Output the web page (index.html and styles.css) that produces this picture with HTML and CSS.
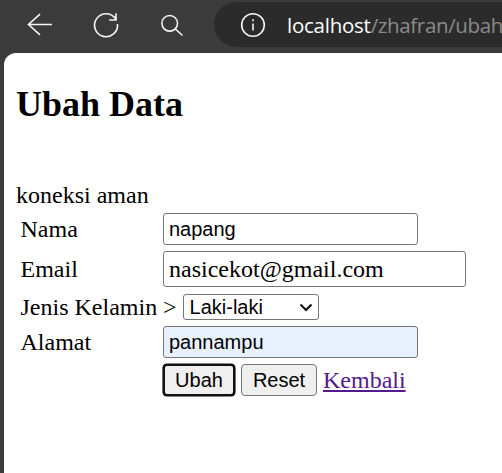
FILE: index.html
```html
<!DOCTYPE html>
<html lang="id">
<head>
<meta charset="utf-8">
<title>Ubah Data</title>
<link rel="stylesheet" href="styles.css">
</head>
<body>
<header class="toolbar">
  <svg class="icon" viewBox="0 0 28 28"><path d="M2 13.5H26M14 3.2L2.5 13.5L14 23.8"/></svg>
  <svg class="icon" viewBox="0 0 28 28"><path d="M25.5 13A11.5 11.5 0 1 1 23.6 7.8M24 2.2V9H17.2"/></svg>
  <svg class="icon" viewBox="0 0 28 28"><circle cx="11.7" cy="12.3" r="7.8"/><path d="M17.4 18L24.5 24.5"/></svg>
  <div class="address">
    <svg class="info" viewBox="0 0 26 26"><circle cx="13" cy="13" r="11.3"/><path d="M13 11.5V18.5M13 7.2V9.2"/></svg>
    <span class="url"><span class="host">localhost</span><span class="path">/zhafran/ubah</span></span>
  </div>
</header>
<main class="page">
  <h2 class="title">Ubah Data</h2>
  <p class="status">koneksi aman</p>
  <form class="form">
    <div class="row"><label class="label" for="nama">Nama</label><input class="field" id="nama" type="text" value="napang"></div>
    <div class="row row-email"><label class="label" for="email">Email</label><input class="field field-email" id="email" type="text" value="nasicekot@gmail.com"></div>
    <div class="row row-gender"><label class="label" for="jk">Jenis Kelamin</label><div class="gender"><span>&gt;</span><div class="select-wrap"><select class="select" id="jk"><option>Laki-laki</option><option>Perempuan</option></select><svg class="chevron" viewBox="0 0 14 9"><path d="M1.5 1.5L7 7L12.5 1.5"/></svg></div></div></div>
    <div class="row"><label class="label" for="alamat">Alamat</label><input class="field field-filled" id="alamat" type="text" value="pannampu"></div>
    <div class="row"><span></span><div class="actions"><button class="button button-focus" type="button">Ubah</button><button class="button button-reset" type="button">Reset</button><a class="link" href="#">Kembali</a></div></div>
  </form>
</main>
</body>
</html>
```
FILE: styles.css
```css
* { box-sizing: border-box; }

body {
  margin: 0;
  height: 473px;
  overflow: hidden;
  background: #3b3b3b;
  color: #000;
  font: 24px/28px "Liberation Serif", serif;
}

.toolbar {
  display: flex;
  align-items: center;
  height: 53px;
  padding: 0 0 4px 26px;
}

.icon, .info, .chevron {
  fill: none;
  stroke: #f5f5f5;
  stroke-width: 1.6;
  flex: none;
}

.icon { width: 28px; height: 28px; margin-right: 38px; }

.address {
  display: flex;
  align-items: center;
  flex: 1;
  min-width: 0;
  height: 45px;
  margin-left: -10px;
  padding-left: 26px;
  border-radius: 23px 0 0 23px;
  background: #2b2b2b;
}

.info { width: 26px; height: 26px; margin-right: 21px; }
.url { font: 20.5px/28px "Open Sans", sans-serif; white-space: nowrap; }
.host { color: #fff; font-weight: 500; letter-spacing: -0.25px; }
.path { color: #8b8b8b; letter-spacing: -0.35px; }

.page {
  height: 420px;
  margin-left: 4px;
  padding: 30px 0 0 12px;
  border-top-left-radius: 12px;
  background: #fff;
}

.title { margin: 0; font-size: 36px; line-height: 42px; font-weight: bold; }
.status { margin: 56px 0 0; }

.form {
  display: flex;
  flex-direction: column;
  gap: 6px;
  margin-top: 4px;
  padding-left: 4.5px;
}

.row {
  display: grid;
  grid-template-columns: 142.5px auto;
  align-items: center;
  justify-content: start;
  height: 32px;
}

.row-email { height: 36px; }
.row-gender { height: 27px; padding-bottom: 1px; }
.label { white-space: nowrap; }

.field {
  width: 255px;
  height: 32px;
  padding: 1px 5px;
  border: 1px solid #767676;
  border-radius: 3px;
  background: #fff;
  color: #000;
  font: 20px "Liberation Sans", sans-serif;
}

.field-email { width: 303px; height: 36px; font: 24px "Liberation Serif", serif; }
.field-filled { background: #e8f0fe; }

.gender, .actions { display: flex; align-items: center; }
.gender { gap: 6px; height: 26px; }
.actions { gap: 6px; }
.select-wrap { position: relative; display: flex; }

.select {
  appearance: none;
  width: 136px;
  height: 26px;
  padding: 0 6px;
  border: 1px solid #767676;
  border-radius: 3px;
  background: #fff;
  color: #000;
  font: 20px "Liberation Sans", sans-serif;
}

.chevron {
  position: absolute;
  right: 6px;
  top: 9px;
  width: 14px;
  height: 9px;
  stroke: #111;
  stroke-width: 2.2;
  pointer-events: none;
}

.button {
  width: 72px;
  height: 32px;
  padding: 0;
  border: 1px solid #767676;
  border-radius: 4px;
  background: #efefef;
  color: #000;
  font: 20px "Liberation Sans", sans-serif;
}

.button-focus { border: 2px solid #101010; box-shadow: 0 0 0 0.6px #101010; }
.button-reset { width: 76px; }
.link { color: #551a8b; text-decoration: underline 2px; text-underline-offset: 2px; }
```
